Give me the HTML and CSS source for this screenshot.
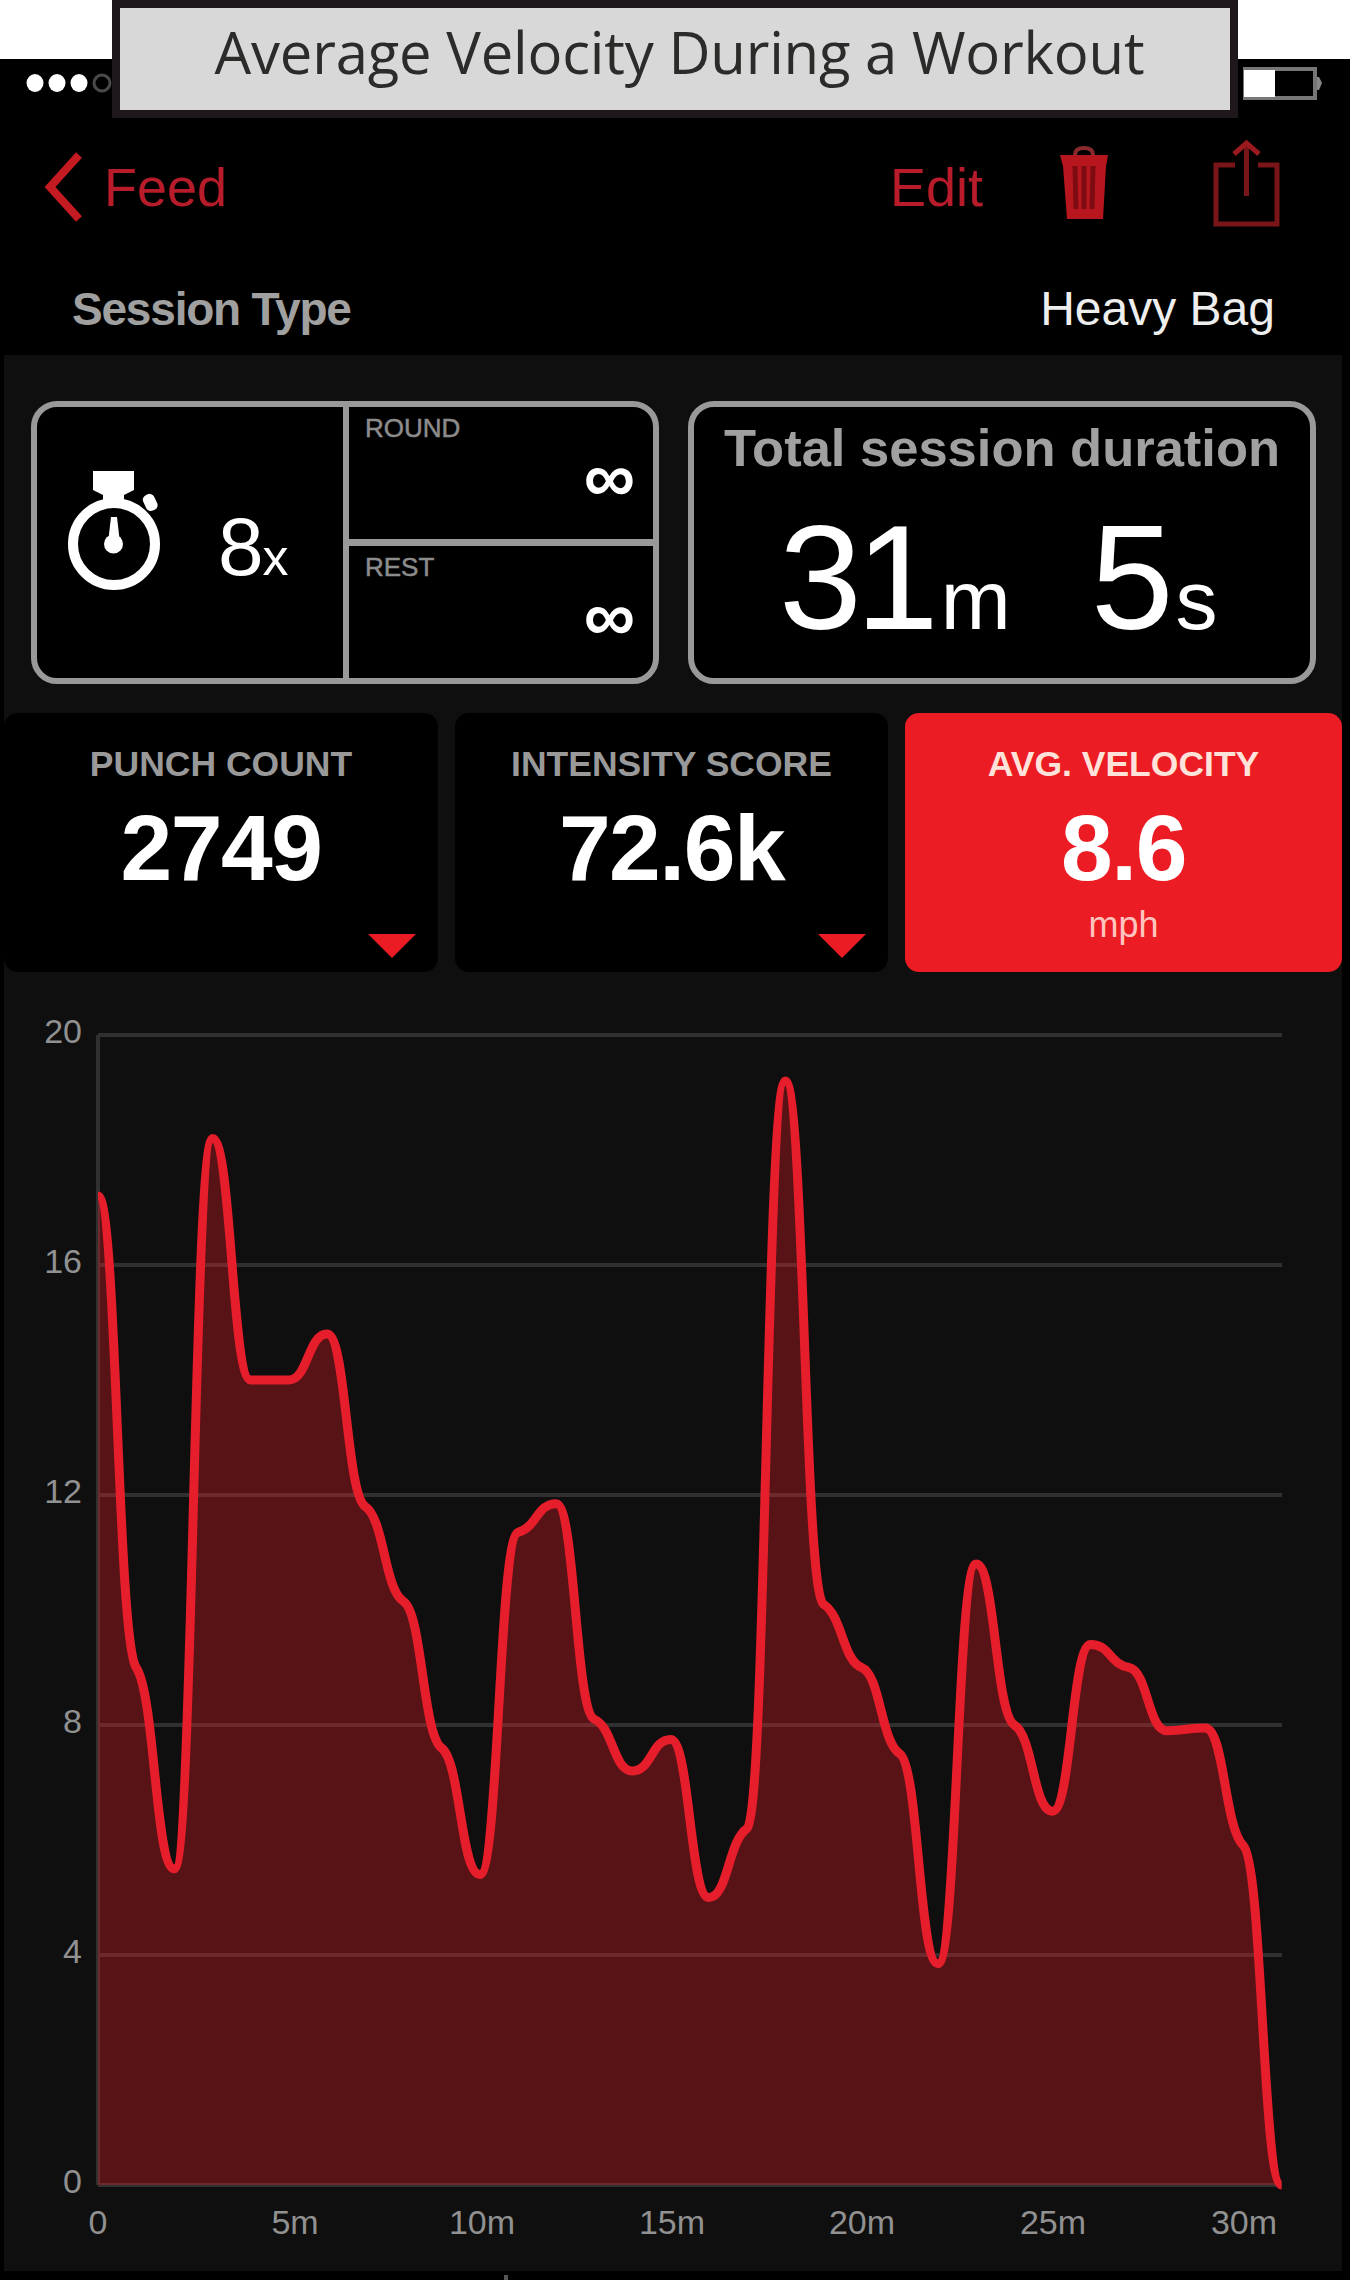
FILE: index.html
```html
<!DOCTYPE html>
<html lang="en">
<head>
    <meta charset="UTF-8">
    <meta name="viewport" content="width=device-width, initial-scale=1.0">
    <title>Average Velocity During a Workout</title>
    <link rel="stylesheet" href="styles.css">
</head>
<body>
    <h1 class="caption">Average Velocity During a Workout</h1>

    <div class="phone">
        <div class="status-bar">
            <svg width="90" height="20" viewBox="0 0 90 20">
                <g fill="#fff">
                    <ellipse cx="10" cy="10" rx="8.500" ry="9"/>
                    <ellipse cx="32" cy="10" rx="8.500" ry="9"/>
                    <ellipse cx="54" cy="10" rx="8.500" ry="9"/>
                </g>
                <circle cx="77" cy="10" r="8" fill="none" stroke="#4a4a4a" stroke-width="3"/>
            </svg>
            <svg width="82" height="36" viewBox="0 0 82 36">
                <rect x="3" y="4" width="70" height="29" fill="none" stroke="#777" stroke-width="4"/>
                <rect x="2" y="5" width="31" height="27" fill="#fff"/>
                <path d="M75 12 h2 l3 6 -3 7 h-2 z" fill="#888"/>
            </svg>
        </div>

        <div class="nav">
            <a class="back">
                <svg width="40" height="100" viewBox="0 0 40 100">
                    <path d="M35 16 L6 48 L35 80" fill="none" stroke="#c41a22" stroke-width="8"/>
                </svg>
                Feed
            </a>
            <div class="nav-actions">
                <span>Edit</span>
                <svg class="trash" width="54" height="100" viewBox="0 0 54 100">
                    <path d="M18 16 q0 -7 9 -7 t9 7" fill="none" stroke="#8a2a2c" stroke-width="4"/>
                    <path d="M3 16 H51 L49 27 L46 80 H10 L6 27 Z" fill="#b8161f"/>
                    <path d="M18 27 L19 70 M27 27 V70 M36 27 L35 70" stroke="#7c0c12" stroke-width="5"/>
                </svg>
                <svg class="share" width="68" height="100" viewBox="0 0 68 100">
                    <g fill="none" stroke="#7a1519" stroke-width="5">
                        <path d="M23 26 H4 V85 H65 V26 H46"/>
                        <path d="M34.500 4 V57"/>
                    </g>
                    <path d="M22 15 L34.500 4 L47 15" fill="none" stroke="#9a1a20" stroke-width="5"/>
                </svg>
            </div>
        </div>

        <div class="session-type">
            <span class="label">Session Type</span>
            <span class="value">Heavy Bag</span>
        </div>

        <div class="panel">
            <div class="cards">
                <div class="card rounds">
                    <div class="round-count">
                        <svg width="100" height="130" viewBox="0 0 100 130">
                            <g fill="#fff">
                                <path d="M28 6 h41 v19 l-10 5 v5 h-21 v-5 l-10 -5 z"/>
                                <rect x="79" y="29" width="12" height="17" rx="5" transform="rotate(-25 85 37)"/>
                                <path d="M46 52 h6 l3 26 h-12 z"/>
                                <circle cx="48.500" cy="79" r="9.500"/>
                            </g>
                            <circle cx="49" cy="79" r="41" fill="none" stroke="#fff" stroke-width="10"/>
                        </svg>
                        <span class="count">8<small>x</small></span>
                    </div>
                    <div class="round-times">
                        <div class="time-cell">
                            <span class="cell-label">ROUND</span>
                            <span class="cell-value">∞</span>
                        </div>
                        <div class="time-cell">
                            <span class="cell-label">REST</span>
                            <span class="cell-value">∞</span>
                        </div>
                    </div>
                </div>
                <div class="card duration">
                    <h2>Total session duration</h2>
                    <div class="time"><span>31<small>m</small></span><span>5<small>s</small></span></div>
                </div>
            </div>

            <div class="stats">
                <div class="stat">
                    <h3>PUNCH COUNT</h3>
                    <p class="number">2749</p>
                    <i class="arrow"></i>
                </div>
                <div class="stat">
                    <h3>INTENSITY SCORE</h3>
                    <p class="number">72.6k</p>
                    <i class="arrow"></i>
                </div>
                <div class="stat active">
                    <h3>AVG. VELOCITY</h3>
                    <p class="number">8.6</p>
                    <p class="unit">mph</p>
                </div>
            </div>

            <svg id="chart" class="chart" width="1338" height="1299" viewBox="4 972 1338 1299"></svg>
        </div>
        <div class="next-row"></div>
    </div>

    <script src="chart.js"></script>
</body>
</html>
```
FILE: styles.css
```css
* {
    box-sizing: border-box;
}

body {
    margin: 0;
    width: 1350px;
    height: 2280px;
    padding-top: 59px;
    background-color: #fff;
    font-family: "Liberation Sans", Arial, sans-serif;
    position: relative;
    overflow: hidden;
}

h2, h3, p {
    margin: 0;
}

/* caption lies over the top of the phone screen */
.caption {
    position: absolute;
    top: 0;
    left: 112px;
    width: 1126px;
    height: 118px;
    margin: 0;
    padding: 0 0 14px 9px;
    border: 8px solid #1e171b;
    background-color: #d8d8d8;
    color: #2b2b2a;
    font-family: "Open Sans", "Noto Sans", sans-serif;
    font-size: 58px;
    font-weight: normal;
    line-height: 88px;
    letter-spacing: -0.2px;
    text-align: center;
    white-space: nowrap;
}

.phone {
    height: 2221px;
    background-color: #000;
}

.status-bar {
    height: 59px;
    padding: 6px 26px 0 25px;
    display: flex;
    justify-content: space-between;
}

.status-bar svg:first-child {
    margin-top: 8px;
}

.nav {
    height: 142px;
    padding: 0 70px 4px 44px;
    display: flex;
    align-items: center;
    justify-content: space-between;
    color: #b81c2a;
    font-size: 54px;
}

.back, .nav-actions {
    display: flex;
    align-items: center;
}

.back {
    gap: 20px;
}

.back svg, .nav-actions svg {
    margin-top: 4px;
}

.nav-actions .trash {
    margin-left: 74px;
    margin-right: 101px;
}

.session-type {
    height: 95px;
    padding: 2px 75px 0 72px;
    display: flex;
    align-items: center;
    justify-content: space-between;
    font-size: 48px;
}

.session-type .label {
    color: #a0a0a0;
    font-size: 46px;
    font-weight: bold;
    letter-spacing: -1.2px;
}

.session-type .value {
    color: #eee;
}

.panel {
    width: 1338px;
    height: 1916px;
    margin-left: 4px;
    padding-top: 46px;
    background-color: #0f0f0f;
}

.cards {
    display: flex;
    gap: 29px;
    margin-left: 27px;
}

.card {
    width: 628px;
    height: 283px;
    border: 6px solid #999;
    border-radius: 26px;
    background-color: #000;
    color: #fff;
}

.rounds {
    display: flex;
}

.round-count {
    width: 306px;
    padding: 58px 0 0 28px;
    display: flex;
}

.count {
    margin: 35px 0 0 53px;
    font-size: 82px;
    line-height: 94px;
    letter-spacing: -1px;
}

.count small {
    font-size: 52px;
}

.round-times {
    flex: 1;
    border-left: 6px solid #999;
    display: flex;
    flex-direction: column;
}

.time-cell {
    height: 131px;
    padding: 6px 18px 0 16px;
    display: flex;
    flex-direction: column;
}

.time-cell:first-child {
    height: 139px;
    border-bottom: 7px solid #999;
}

.cell-label {
    color: #8c8c8c;
    font-size: 26px;
    line-height: 30px;
    -webkit-text-stroke: 0.5px #8c8c8c;
}

.cell-value {
    align-self: flex-end;
    font-size: 72px;
    font-weight: bold;
    line-height: 68px;
}

.duration h2 {
    padding-top: 11px;
    color: #a0a0a0;
    font-size: 52.500px;
    line-height: 60px;
    text-align: center;
    white-space: nowrap;
}

.time {
    padding: 15px 0 0 85px;
    display: flex;
    gap: 80px;
    font-size: 149px;
    line-height: 170px;
    letter-spacing: -6px;
}

.time small {
    margin-left: 8px;
    font-size: 84px;
    letter-spacing: 0;
}

.stats {
    display: grid;
    grid-template-columns: 434px 433px 1fr;
    gap: 17px;
    margin-top: 29px;
}

.stat {
    height: 259px;
    padding-top: 30px;
    border-radius: 14px;
    background-color: #000;
    color: #fff;
    text-align: center;
}

.stat h3 {
    color: #999;
    font-size: 35.500px;
    line-height: 42px;
}

.stat .number {
    margin-top: 9px;
    font-size: 93px;
    font-weight: bold;
    line-height: 108px;
    letter-spacing: -1.5px;
}

.stat.active {
    background-color: #eb1c24;
}

.stat.active h3 {
    color: #ffe3da;
}

.unit {
    color: #ffc4c0;
    font-size: 36px;
    line-height: 46px;
}

.arrow {
    display: block;
    width: 0;
    margin: 32px 22px 0 auto;
    border: 24px solid transparent;
    border-top-color: #eb1c24;
    border-bottom: 0;
}

.chart {
    display: block;
}

.chart text {
    fill: #919191;
    font-size: 34px;
}

.grid-line {
    stroke: #303030;
    stroke-width: 4;
}

.area {
    fill: #eb1c24;
    fill-opacity: 0.33;
}

.curve {
    fill: none;
    stroke: #e61e2b;
    stroke-width: 9;
}

.next-row {
    width: 4px;
    height: 5px;
    margin: 4px 0 0 504px;
    background-color: #555;
}
```
FILE: chart.js
```javascript
const velocity = [
    17.2, 9.0, 5.5, 18.2, 14.0, 14.0, 14.8, 11.8, 10.15, 7.6, 5.4, 11.35, 11.85, 8.1, 7.2, 7.75,
    5.0, 6.2, 19.2, 10.1, 9.0, 7.5, 3.85, 10.8, 8.0, 6.5, 9.4, 9.0, 7.9, 7.95, 5.9, 0
];

const left = 98;
const right = 1282;
const bottom = 2185;
const unit = 57.5;
const step = 38.18;

const chart = document.getElementById('chart');

function add(name, attributes, text) {
    const element = document.createElementNS('http://www.w3.org/2000/svg', name);
    for (const key in attributes) {
        element.setAttribute(key, attributes[key]);
    }
    if (text !== undefined) {
        element.textContent = text;
    }
    chart.appendChild(element);
}

// Gentle slope on the way up or down, flat on peaks and valleys
function slope(points, i) {
    if (i === 0 || i === points.length - 1) {
        return 0;
    }
    const before = (points[i].y - points[i - 1].y) / step;
    const after = (points[i + 1].y - points[i].y) / step;
    if (before * after <= 0) {
        return 0;
    }
    return 0.2 * 2 * before * after / (before + after);
}

for (let value = 0; value <= 20; value += 4) {
    const y = bottom - value * unit;
    add('line', { x1: left, x2: right, y1: y, y2: y, class: 'grid-line' });
    add('text', { x: 82, y: y + 8, 'text-anchor': 'end' }, value);
}
add('line', { x1: left, x2: left, y1: bottom - 20 * unit, y2: bottom, class: 'grid-line' });

const labels = { '0': 98, '5m': 295, '10m': 482, '15m': 672, '20m': 862, '25m': 1053, '30m': 1244 };
for (const label in labels) {
    add('text', { x: labels[label], y: 2234, 'text-anchor': 'middle' }, label);
}

const points = velocity.map((value, i) => ({ x: left + i * step, y: bottom - value * unit }));
let path = `M${points[0].x} ${points[0].y}`;
for (let i = 1; i < points.length; i++) {
    const a = points[i - 1];
    const b = points[i];
    const handle = step * 0.5;
    path += ` C${a.x + handle} ${a.y + handle * slope(points, i - 1)}`;
    path += ` ${b.x - handle} ${b.y - handle * slope(points, i)} ${b.x} ${b.y}`;
}
add('path', { d: `${path} L${left} ${bottom} Z`, class: 'area' });
add('path', { d: path, class: 'curve' });
```
